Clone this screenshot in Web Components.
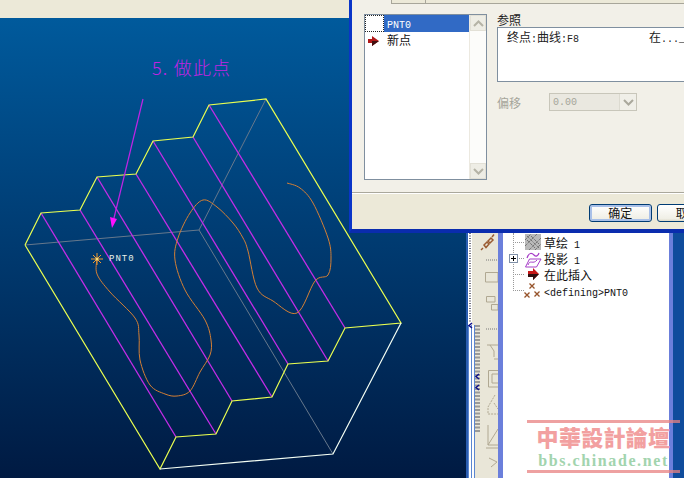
<!DOCTYPE html>
<html>
<head>
<meta charset="utf-8">
<title>PNT0</title>
<style>
html,body{margin:0;padding:0;width:684px;height:478px;overflow:hidden;background:#003468}
body{font:12px "Noto Sans CJK SC","Liberation Sans",sans-serif}
.lat{font:10px "Liberation Mono",monospace}
</style>
</head>
<body>
<cad-desktop>
  <cad-viewport></cad-viewport>
  <cad-dialog>
    <point-list slot="list">
      <point-row selected><span class="lat">PNT0</span></point-row>
      <point-row arrow>新点</point-row>
    </point-list>
    <ref-panel slot="panel"></ref-panel>
    <xp-button slot="buttons" default>确定</xp-button>
    <xp-button slot="buttons">取消</xp-button>
  </cad-dialog>
  <tool-panel>
    <tree-item icon="sketch">草绘<span class="lat">&nbsp;1</span></tree-item>
    <tree-item icon="proj" expand>投影<span class="lat">&nbsp;1</span></tree-item>
    <tree-item icon="insert">在此插入</tree-item>
    <tree-item icon="point"><span class="lat">&lt;defining&gt;PNT0</span></tree-item>
  </tool-panel>
  <site-mark></site-mark>
</cad-desktop>

<script>
// smooth line through the traced points
function smooth(pts) {
    let d = 'M' + pts[0].join(' ');
    for (let i = 0; i < pts.length - 1; i++) {
        const p0 = pts[i - 1] || pts[i], p1 = pts[i], p2 = pts[i + 1], p3 = pts[i + 2] || p2;
        const c1 = [p1[0] + (p2[0] - p0[0]) / 6, p1[1] + (p2[1] - p0[1]) / 6];
        const c2 = [p2[0] - (p3[0] - p1[0]) / 6, p2[1] - (p3[1] - p1[1]) / 6];
        d += ` C${c1[0]} ${c1[1]} ${c2[0]} ${c2[1]} ${p2[0]} ${p2[1]}`;
    }
    return d;
}

function shell(el, html) {
    el.attachShadow({ mode: 'open' }).innerHTML = html;
}

class CadDesktop extends HTMLElement {
    constructor() {
        super();
        shell(this, `<style>:host{display:block;position:relative;width:684px;height:478px;overflow:hidden}</style><slot></slot>`);
    }
}

class CadViewport extends HTMLElement {
    constructor() {
        super();
        const top = [[41,213],[80,210],[97,177],[136,174],[153,141],[193,137],[209,105]];
        const low = [[176,437],[216,434],[232,401],[272,397],[288,364],[328,361],[345,328]];
        const ribs = top.map((p, i) => `<line x1="${p[0]}" y1="${p[1]}" x2="${low[i][0]}" y2="${low[i][1]}"/>`).join('');
        const curve = smooth([[97,259],[97,274],[110,292],[135,318],[139,335],[140,360],[150,385],[165,394],[177,396],[190,391],[200,372],[210,355],[211,340],[205,320],[185,290],[175,260],[178,238],[190,213],[203,200],[217,207],[233,223],[243,238],[248,251],[257,288],[273,301],[297,313],[315,281],[328,275],[331,258],[328,238],[313,203],[300,188],[287,183]]);
        shell(this, `<style>
            :host{position:absolute;left:0;top:0;width:684px;height:478px;display:flex;flex-direction:column}
            .menu{height:18px;width:349px;background:#ece9d8;flex:none}
            .view{flex:1;position:relative;background:linear-gradient(#005a9c,#003a70 50%,#001a42)}
            svg{position:absolute;left:0;top:-18px;display:block}
            .note{font:18px "Noto Sans CJK SC",sans-serif;fill:#c024e4;font-weight:300;letter-spacing:1.2px}
            .lab{font:9px "Liberation Mono",monospace;fill:#e8f0e8;letter-spacing:1px}
        </style>
        <div class="menu"></div>
        <div class="view">
        <svg width="684" height="478" fill="none" shape-rendering="auto">
            <g stroke="#66788c" stroke-width="1">
                <path d="M25 245L199 230L333 454M199 230L266 99"/>
            </g>
            <g stroke="#c42ce8" stroke-width="1.3">${ribs}</g>
            <path d="${curve}" stroke="#d47f35" stroke-width="1"/>
            <path d="M25 245L41 213L80 210L97 177L136 174L153 141L193 137L209 105L266 99L401 323L345 328L328 361L288 364L272 397L232 401L216 434L176 437L160 469L25 245" stroke="#eaff50" stroke-width="1.2"/>
            <path d="M160 469L333 454L401 323" stroke="#f4fff4" stroke-width="1.2"/>
            <path d="M143 99L113 222" stroke="#c024e4" stroke-width="1.2"/>
            <path d="M110 217L117 219L112 228Z" fill="#ff10ff"/>
            <path d="M91 259H103M97 253V265M93 255L101 263M101 255L93 263" stroke="#f09a30" stroke-width="1"/>
            <circle cx="97" cy="259" r="1.5" fill="#ffe070"/>
            <text class="note" x="152" y="75">5. 做此点</text>
            <text class="lab" x="109" y="261">PNT0</text>
        </svg>
        </div>`);
    }
}

class CadDialog extends HTMLElement {
    constructor() {
        super();
        shell(this, `<style>
            :host{position:absolute;left:349px;top:0;width:370px;height:233px;box-sizing:border-box;display:flex;flex-direction:column;
                border-left:3px solid #0a35c8;border-bottom:4px solid #0a2cae;background:#f2f0e8}
            .tab{height:3px;margin-left:39px;border:1px solid #a8a69a;border-top:0;background:#ece9d8;flex:none;position:relative}
            .tab::before{content:"";position:absolute;left:33px;top:0;bottom:0;border-left:1px solid #a8a69a}
            .body{flex:1;display:flex;gap:10px;padding:10px 0 0 12px;min-height:0}
            .foot{flex:none;height:37px;box-sizing:border-box;border-top:1px solid #aaa89c;box-shadow:inset 0 1px 0 #fff;background:#ece9d8;
                display:flex;gap:5px;padding:11px 0 0 237px}
        </style>
        <div class="tab"></div>
        <div class="body"><slot name="list"></slot><slot name="panel"></slot></div>
        <div class="foot"><slot name="buttons"></slot></div>`);
    }
}

class PointList extends HTMLElement {
    constructor() {
        super();
        shell(this, `<style>
            :host{display:flex;flex:none;width:123px;height:166px;box-sizing:border-box;border:1px solid #7f8f9f;background:#fff}
            .rows{flex:1;min-width:0}
            .bar{width:16px;display:flex;flex-direction:column;justify-content:space-between;border-left:1px solid #ece9e0;background:#fcfcfa}
            .btn{height:16px;box-sizing:border-box;background:#eeede5;border:1px solid #e2e0d6;display:flex;align-items:center;justify-content:center}
            svg{display:block}
        </style>
        <div class="rows"><slot></slot></div>
        <div class="bar">
            <div class="btn"><svg width="11" height="7" fill="none" stroke="#b5b3a6" stroke-width="2"><path d="M1 6L5.5 1.5L10 6"/></svg></div>
            <div class="btn"><svg width="11" height="7" fill="none" stroke="#b5b3a6" stroke-width="2"><path d="M1 1L5.5 5.5L10 1"/></svg></div>
        </div>`);
    }
}

class PointRow extends HTMLElement {
    constructor() {
        super();
        const mark = this.hasAttribute('arrow')
            ? `<svg width="12" height="12"><path d="M0 4H4V1L11 6L4 11V8H0Z" fill="#b01818"/><path d="M4 6H11L4 11Z" fill="#401010"/></svg>` : '';
        shell(this, `<style>
            :host{display:flex;height:17px;align-items:center}
            .ic{width:19px;height:17px;box-sizing:border-box;display:flex;align-items:center;padding-left:3px;flex:none}
            :host([selected]) .ic{outline:1px dotted #222;outline-offset:-1px}
            .tx{flex:1;padding-left:3px;height:17px;line-height:15px;color:#111}
            :host([selected]) .tx{background:#316ac5;color:#fff}
            svg{display:block}
        </style><div class="ic">${mark}</div><div class="tx"><slot></slot></div>`);
    }
}

class RefPanel extends HTMLElement {
    constructor() {
        super();
        shell(this, `<style>
            :host{display:flex;flex:none;flex-direction:column;width:240px;color:#222;font-size:12px}
            .cap{height:13px;line-height:12px}
            .box{height:55px;box-sizing:border-box;border:1px solid #7f8f9f;background:#fff;padding:1px 9px;display:flex;line-height:16px}
            .box span:first-child{width:142px;flex:none}
            .lat{font:10px "Liberation Mono",monospace}
            .off{display:flex;align-items:center;gap:28px;margin-top:11px;color:#a5a59a}
            .combo{width:88px;height:18px;box-sizing:border-box;border:1px solid #c8c6ba;background:#eae8e0;display:flex;justify-content:space-between;padding-left:3px;align-items:center}
            .combo i{width:16px;height:16px;background:#f0efe8;border-left:1px solid #dcdad0;display:flex;align-items:center;justify-content:center}
            svg{display:block}
        </style>
        <div class="cap">参照</div>
        <div class="box"><span>终点<span class="lat">:</span>曲线<span class="lat">:F8</span></span><span>在<span class="lat">..._</span></span></div>
        <div class="off"><span>偏移</span>
            <div class="combo"><span class="lat">0.00</span><i><svg width="11" height="7" fill="none" stroke="#aaa89c" stroke-width="2"><path d="M1 1L5.5 5.5L10 1"/></svg></i></div>
        </div>`);
    }
}

class XpButton extends HTMLElement {
    constructor() {
        super();
        shell(this, `<style>
            :host{display:block;width:66px;height:18px;box-sizing:border-box;border:1px solid #003c74;border-radius:3px;
                background:linear-gradient(#fff,#f0efe6 85%,#dcd8c8);text-align:center;line-height:15px;color:#111;font-size:12px}
            :host([default]){box-shadow:inset 0 0 0 2px #a9c0e8}
        </style><slot></slot>`);
    }
}

class ToolPanel extends HTMLElement {
    constructor() {
        super();
        shell(this, `<style>
            :host{position:absolute;left:466px;top:233px;width:218px;height:245px;display:flex}
            .strip{width:32px;flex:none;background:#e9e6d8}
            .strip svg{display:block}
            .band{width:5px;background:#6b7fdb;flex:none}
            .tree{width:166px;flex:none;background:#fff;position:relative;padding:1px 0 0 10px;box-sizing:border-box}
            .guide{position:absolute;left:10px;top:0;height:58px;border-left:1px dotted #999}
            .side{width:4px;background:#6b7fdb;flex:none}
            .rest{flex:1;background:#0f4c9c}
        </style>
        <div class="strip">
            <svg width="32" height="245" fill="none">
                <rect width="2" height="245" fill="#2a5db0"/>
                <rect x="2" width="4" height="92" fill="#fff"/>
                <path d="M4 0V90" stroke="#334" stroke-dasharray="1 1.5" stroke-width="1.4"/>
                <rect x="2" y="92" width="7" height="153" fill="#fff"/>
                <path d="M2.500 92V245M5.500 92V245M8.500 92V245" stroke="#5b86d0"/>
                <path d="M11.500 92V199" stroke="#9a9a98" stroke-dasharray="2 1.500" stroke-width="5"/>
                <path d="M6 90L3 92.500L6 95M13 141L10 143.500L13 146M13 152L10 154.500L13 157" stroke="#10108a" stroke-width="1.500"/>
                <g stroke="#b0a892">
                    <path d="M20 27H32M20 96H32" stroke-dasharray="1 1" stroke="#777"/>
                    <path d="M19.500 39.500H32V49H19.500Z"/>
                    <path d="M20.500 63.500H29V69H20.500ZM25.500 71.500H32V77H25.500Z"/>
                    <path d="M21 112H32M24 112L28 118V124M32 126H28"/>
                    <path d="M32 137.500H22.500V154H32M32 141H26V150H32"/>
                    <path d="M29 162L22 174V181H32M28 170L32 176" stroke-dasharray="2 1"/>
                    <path d="M22 192V212H32M22 212L32 196M20 215H32"/>
                    <path d="M23 225L31 229L25 234"/>
                </g>
                <g fill="none" stroke="#9a5b32" stroke-width="1.500">
                    <path d="M18 12L21 9L23 11L20 14.500Z"/>
                    <path d="M22 8L25 5L27 7L24 10Z"/>
                    <path d="M26 4L28 1.500"/>
                    <path d="M17 15L15 17"/>
                </g>
            </svg>
        </div>
        <div class="band"></div>
        <div class="tree"><div class="guide"></div><slot></slot></div>
        <div class="side"></div>
        <div class="rest"></div>`);
    }
}

class TreeItem extends HTMLElement {
    constructor() {
        super();
        const icons = {
            sketch: `<rect x="0" y="0" width="16" height="16" fill="#b9b9b9"/><path d="M0 6L6 0M0 12L12 0M4 16L16 4M10 16L16 10M2 2L14 14M6 2L14 10M2 6L10 14" stroke="#555" stroke-dasharray="1 1"/>`,
            proj: `<path d="M2 8C4 2 7 3 9 5C11 7 13 6 14 3" stroke="#a63cc8" fill="none" stroke-width="1.200"/><path d="M4.500 9H16L11.500 17H0.500Z" fill="none" stroke="#a63cc8"/><path d="M3 15C5 9 8 15 12 10" stroke="#a63cc8" fill="none"/>`,
            insert: `<path d="M3 5H8V2L14 8L8 14V11H3Z" fill="#c81818"/><path d="M3 8H14L8 14V11H3Z" fill="#301010"/>`,
            point: `<path d="M4.500 1.500L9.500 6.500M9.500 1.500L4.500 6.500M-.5 10.500L4.500 15.500M4.500 10.500L-.5 15.500M9.500 9.500L14.500 14.500M14.500 9.500L9.500 14.500" stroke="#96532a" stroke-width="1.300"/>`
        };
        const exp = this.hasAttribute('expand')
            ? `<svg class="box" width="9" height="9"><rect x=".5" y=".5" width="8" height="8" fill="#fff" stroke="#8090a8"/><path d="M2 4.500H7M4.500 2V7" stroke="#000"/></svg>` : '';
        shell(this, `<style>
            :host{display:flex;align-items:center;height:16px;position:relative;color:#111;white-space:nowrap}
            .tick{position:absolute;left:0;top:8px;width:11px;border-top:1px dotted #999}
            .box{position:absolute;left:-4px;top:4px}
            .ic{margin-left:12px;width:16px;height:16px;flex:none;margin-right:3px;overflow:visible;display:block}
        </style><div class="tick"></div>${exp}<svg class="ic" viewBox="0 0 16 16">${icons[this.getAttribute('icon')]}</svg><span><slot></slot></span>`);
    }
}

class SiteMark extends HTMLElement {
    constructor() {
        super();
        shell(this, `<style>
            :host{position:absolute;left:527px;top:420px;width:153px;height:53px;box-sizing:border-box;
                border-top:3px solid rgba(232,130,130,.75);border-bottom:3px solid rgba(232,130,130,.75);
                display:flex;flex-direction:column;align-items:center}
            .zh{font:900 22px/26px "Noto Sans CJK TC",sans-serif;color:#f2a0a0;letter-spacing:.3px;white-space:nowrap}
            .en{font:bold 16px/15px "Liberation Serif",serif;color:#a2d4ae;letter-spacing:1.6px;margin-top:4px;white-space:nowrap}
        </style><div class="zh">中華設計論壇</div><div class="en">bbs.chinade.net</div>`);
    }
}

customElements.define('cad-desktop', CadDesktop);
customElements.define('cad-viewport', CadViewport);
customElements.define('cad-dialog', CadDialog);
customElements.define('point-list', PointList);
customElements.define('point-row', PointRow);
customElements.define('ref-panel', RefPanel);
customElements.define('xp-button', XpButton);
customElements.define('tool-panel', ToolPanel);
customElements.define('tree-item', TreeItem);
customElements.define('site-mark', SiteMark);
</script>
</body>
</html>
